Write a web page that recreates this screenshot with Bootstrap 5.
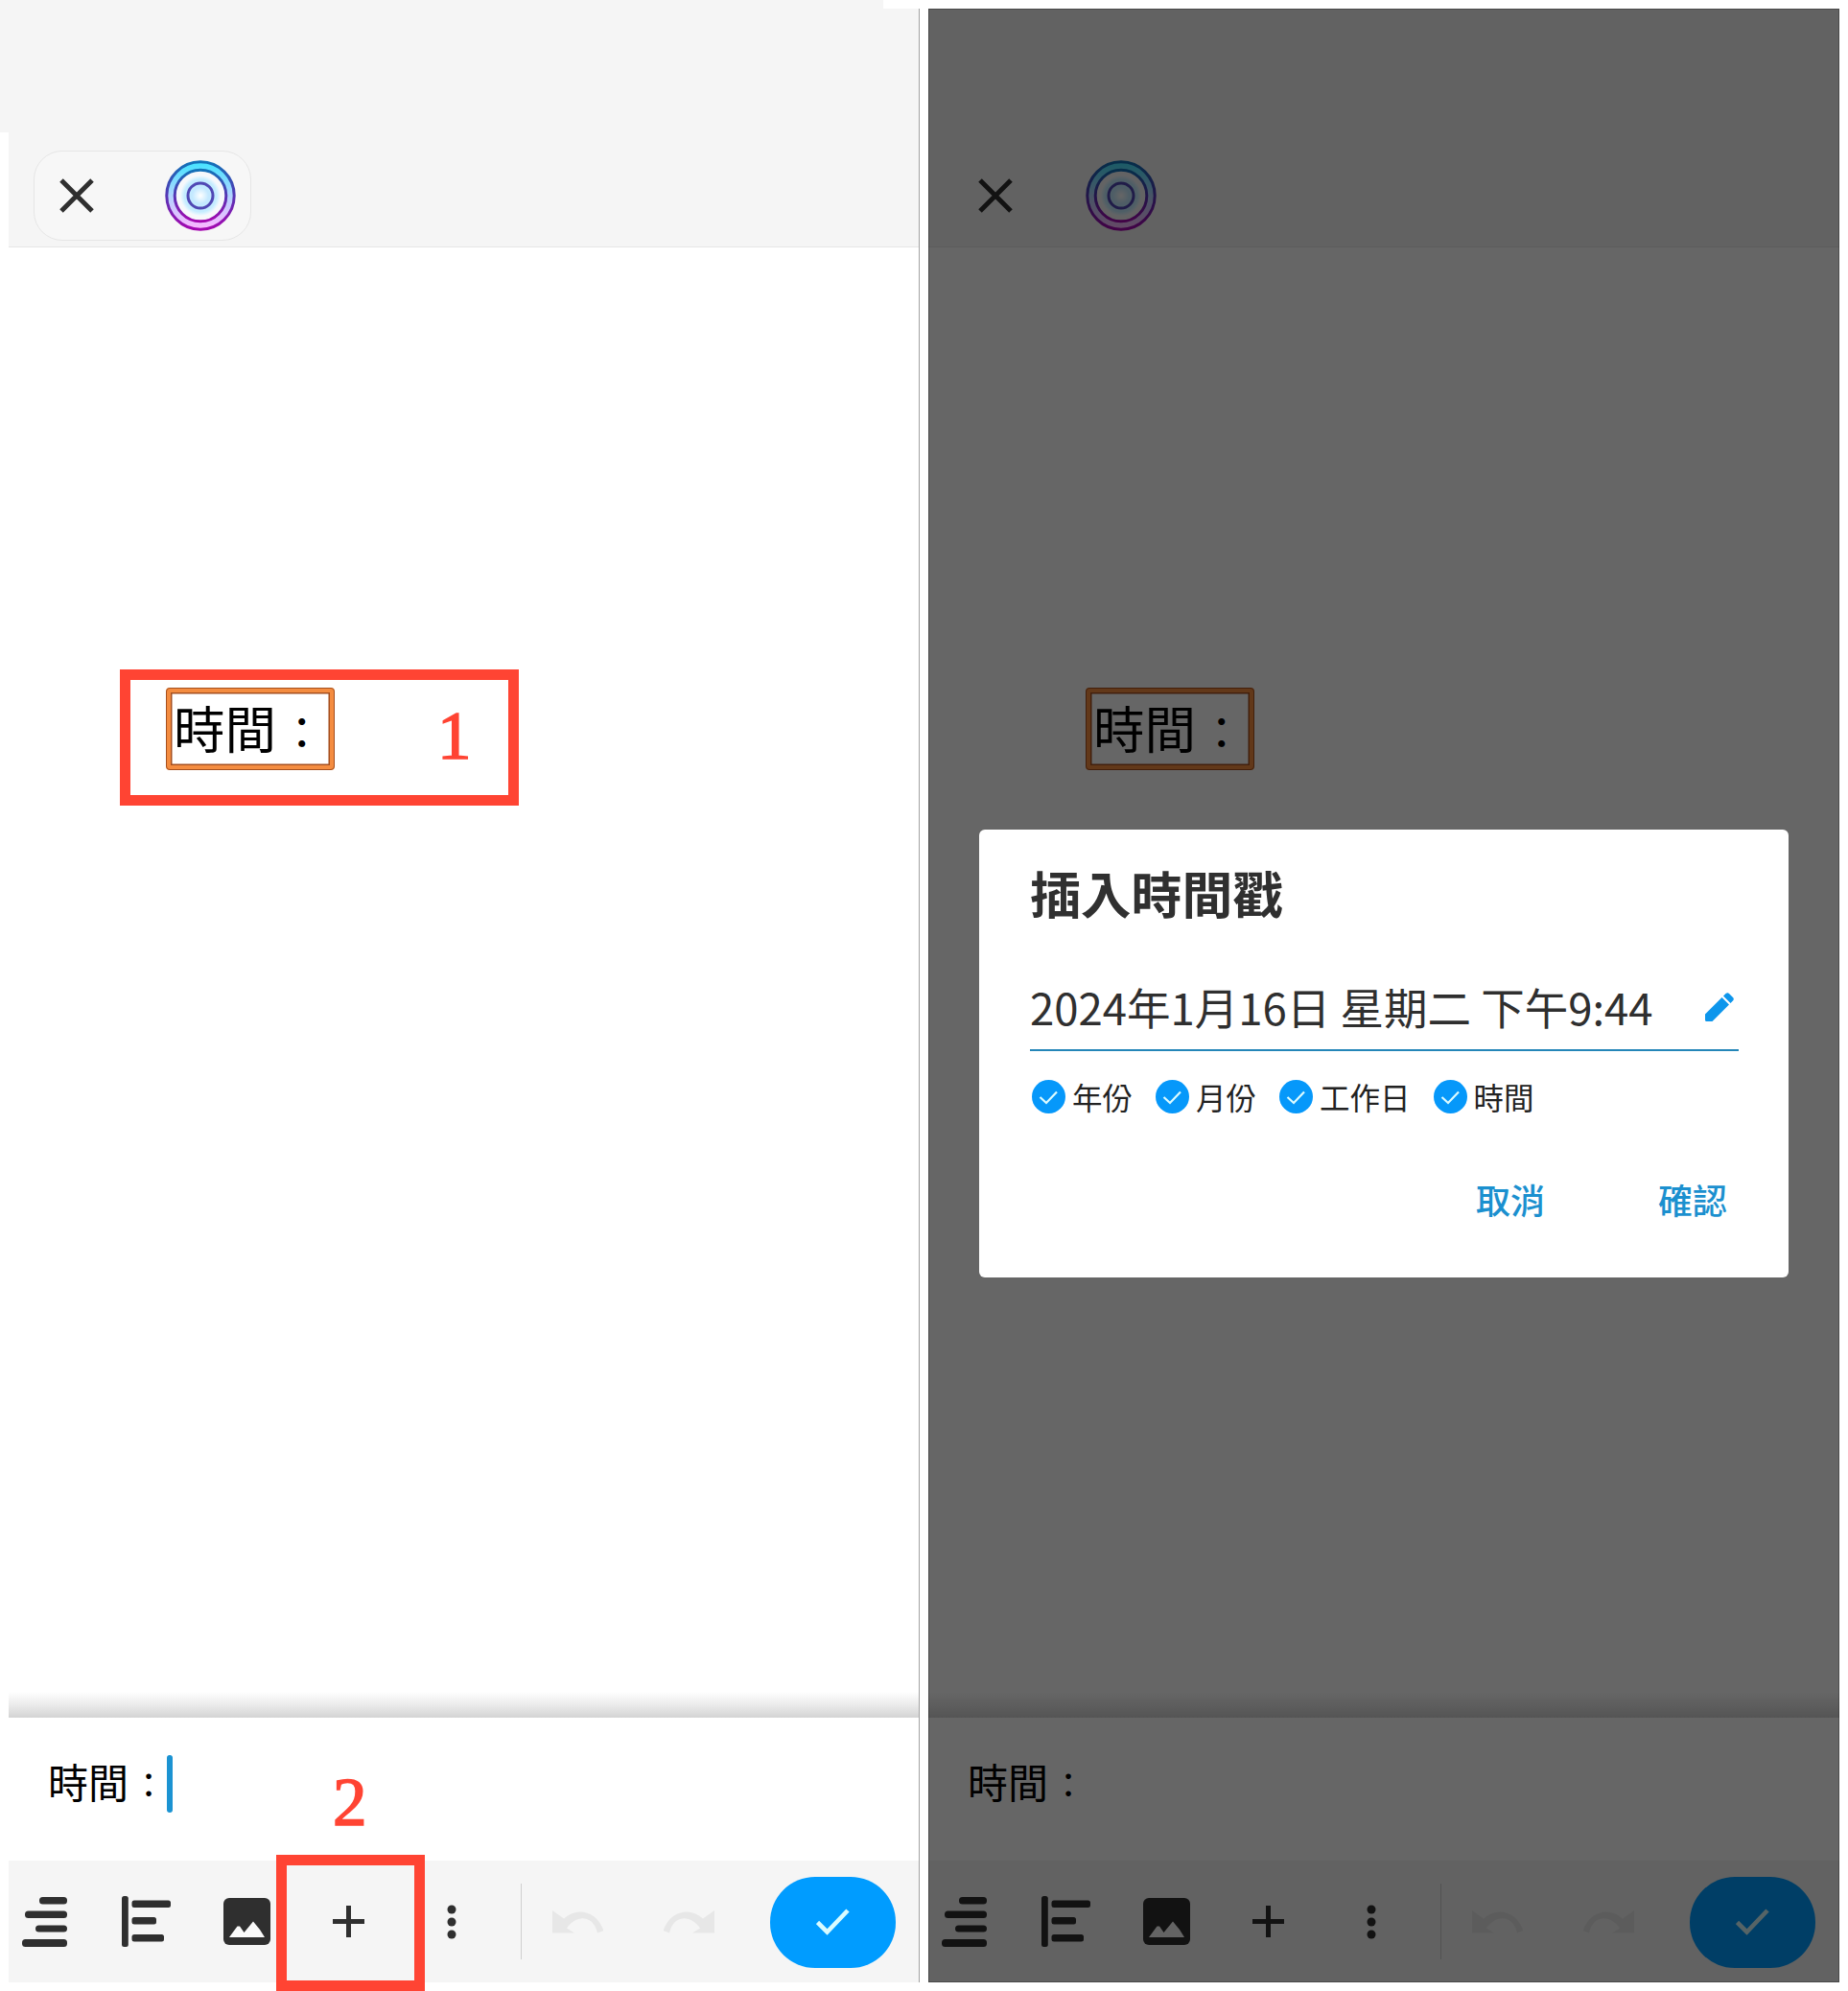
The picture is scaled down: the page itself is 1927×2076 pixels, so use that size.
<!DOCTYPE html>
<html lang="zh-Hant">
<head>
<meta charset="utf-8">
<meta name="viewport" content="width=device-width, initial-scale=1">
<title>插入時間戳</title>
<link href="https://cdn.jsdelivr.net/npm/bootstrap@5.3.0/dist/css/bootstrap.min.css" rel="stylesheet">
<style>
  body {
    font-family: "Noto Sans CJK TC", "Noto Sans", sans-serif;
    color: #2f2f2f;
    background: linear-gradient(#f5f5f5, #f5f5f5) 0 0 / 921px 9px no-repeat,
                linear-gradient(#f5f5f5, #f5f5f5) 0 0 / 9px 138px no-repeat, #fff;
  }
  svg { display: block; flex: none; }
  .stage { width: 1927px; height: 2076px; padding: 9px; gap: 9px; }
  .phone { width: 950px; height: 2058px; border-right: 1px solid #a2a2a2; background: #fff; }
  .phone-dim { border: 0; }
  .topbar { height: 249px; background: #f5f5f5; border-bottom: 1px solid #e6e6e6; padding: 0 0 6px 26px; }
  .top-pill { width: 227px; height: 94px; border: 1px solid #e6e6e6; border-radius: 30px; background: #f7f7f7; padding: 0 10px 0 26px; }
  .canvas-area { background: linear-gradient(to top, #d3d3d3, #ececec 14px, #fff 27px); }
  .topic { left: 164px; top: 459px; width: 176px; height: 86px; border: 5px solid #f48c40; border-radius: 4px;
    box-shadow: inset 0 0 0 1.5px #a54f1e; outline: 1.5px solid #a54f1e; outline-offset: -1.5px;
    color: #000; font-size: 53.5px; line-height: 72px; padding-left: 3px; white-space: nowrap; }
  .colon { display: inline-block; width: 1em; text-align: center; }
  .colon > span { font-size: .86em; }
  .entry { height: 149px; padding: 0 0 12px 41px; font-size: 42px; color: #000; }
  .entry-text { padding-bottom: 7px; }
  .caret { width: 6px; height: 60px; border-radius: 3px; background: #1b93d2; margin-left: -2px; }
  .toolbar { height: 127px; background: #f5f5f5; padding-left: 14px; }
  .tool-rule { width: 1px; height: 79px; background: #cfcfcf; margin: 0 32px 0 67px; }
  .btn-done { width: 131px; height: 95px; border-radius: 47px; background: #009cff; margin: 1px 0 0 58px; }
  .callout { border: 11px solid #ff4433; color: #ff4433; z-index: 5; }
  .callout-1 { left: 125px; top: 698px; width: 416px; height: 142px; }
  .callout-2 { left: 288px; top: 1934px; width: 155px; height: 142px; }
  .callout-num { color: #ff4433; font-family: "Liberation Serif", serif; font-size: 71px; line-height: 1; z-index: 5; -webkit-text-stroke: 1.6px #ff4433; }
  .num-1 { left: 456px; top: 732px; }
  .num-2 { left: 347px; top: 1844px; }
  .scrim { background: rgba(0,0,0,.6); box-shadow: inset 0 0 0 1px rgba(0,0,0,.25); }
  .stamp-dialog { width: 844px; height: 467px; left: 53px; top: 856px; border-radius: 6px; background: #fff; padding: 26px 52px 0 53px; }
  .dlg-title { font-size: 52.8px; line-height: 78px; font-weight: 700; margin: 0; color: #303030; }
  .dlg-value { height: 86px; margin-top: 41px; padding-right: 5px; border-bottom: 2px solid #2486b8; font-size: 45.5px; white-space: nowrap; }
  .dlg-value > span { padding-bottom: 6px; }
  .dlg-value > svg { margin-bottom: 4px; }
  .dlg-options { margin-top: 29px; padding-left: 2px; gap: 24px; font-size: 31.5px; line-height: 36px; color: #222; }
  .dlg-options > span { gap: 7px; }
  .dlg-actions { margin-top: 54px; gap: 118px; padding-right: 12px; }
  .dlg-actions button { border: 0; background: none; padding: 0; font-size: 36px; line-height: 70px; color: #1b90cf; font-weight: 500; }
</style>
<script src="https://cdn.jsdelivr.net/npm/bootstrap@5.3.0/dist/js/bootstrap.bundle.min.js"></script>
</head>
<body class="m-0">

<svg width="0" height="0" class="position-absolute" aria-hidden="true">
  <defs>
    <linearGradient id="ringLine" x1="0" y1="0" x2="0" y2="1"><stop offset="0" stop-color="#1272b8"/><stop offset=".5" stop-color="#5535b4"/><stop offset="1" stop-color="#a507b0"/></linearGradient>
    <linearGradient id="ringBand" x1="0" y1="0" x2="0" y2="1"><stop offset="0" stop-color="#3fe4ff"/><stop offset=".5" stop-color="#b2d4ff"/><stop offset="1" stop-color="#ffb4ff"/></linearGradient>
    <radialGradient id="ringCore"><stop offset="0" stop-color="#fff"/><stop offset=".4" stop-color="#c4e9ff"/><stop offset=".8" stop-color="#c4ecff"/><stop offset="1" stop-color="#f4f9fd"/></radialGradient>
  </defs>
  <symbol id="i-close" viewBox="0 0 36 36"><path d="M2 2 34 34M34 2 2 34" stroke="#2f2f2f" stroke-width="5"/></symbol>
  <symbol id="i-rings" viewBox="0 0 76 76">
    <circle cx="38" cy="38" r="36" fill="url(#ringBand)"/><circle cx="38" cy="38" r="27" fill="#f7f8fb"/>
    <circle cx="38" cy="38" r="21" fill="url(#ringCore)"/>
    <g fill="none" stroke="url(#ringLine)" stroke-width="3"><circle cx="38" cy="38" r="35.2"/><circle cx="38" cy="38" r="26.8"/></g>
    <circle cx="38" cy="38" r="13" fill="none" stroke="#5048b4" stroke-width="3"/>
  </symbol>
  <symbol id="i-right" viewBox="0 0 47 52"><g fill="#2f2f2f"><rect x="18" width="29" height="7.5" rx="3.5"/><rect x="3" y="14.5" width="44" height="7.5" rx="3.5"/><rect x="14" y="29.5" width="33" height="7" rx="3.5"/><rect y="44" width="47" height="8" rx="3.5"/></g></symbol>
  <symbol id="i-outline" viewBox="0 0 51 53"><g fill="#2f2f2f"><rect width="6.8" height="53" rx="2.5"/><rect x="10.5" y="4.5" width="40.5" height="7.5" rx="2.5"/><rect x="10.5" y="22" width="25.5" height="7.5" rx="2.5"/><rect x="10.5" y="40" width="33.5" height="7.5" rx="2.5"/></g></symbol>
  <symbol id="i-image" viewBox="0 0 49 49"><rect width="49" height="49" rx="6" fill="#2f2f2f"/><path d="M6 41 14.5 29.5 17 29.5 21.500 36 31 24.500 38 33 43 41Z" fill="#f9f9f9"/></symbol>
  <symbol id="i-plus" viewBox="0 0 33 33"><path d="M16.500 0V33M0 16.500H33" stroke="#2f2f2f" stroke-width="5"/></symbol>
  <symbol id="i-dots" viewBox="0 0 10 36"><g fill="#2f2f2f"><circle cx="5" cy="5" r="4.500"/><circle cx="5" cy="18" r="4.500"/><circle cx="5" cy="31" r="4.500"/></g></symbol>
  <symbol id="i-undo" viewBox="0 0 53 24"><path d="M0 0V23.500H23L15 18.500C24 5 42 3 47 23.500L53.500 21C46 .5 26-4 12 8.500Z" fill="#e7e7e7"/></symbol>
  <symbol id="i-check" viewBox="0 0 35 28"><path d="M1.500 14.500 11.500 24.500 33 2" fill="none" stroke="#d8fbff" stroke-width="4.600"/></symbol>
  <symbol id="i-tick" viewBox="0 0 35 35"><circle cx="17.500" cy="17.500" r="17.500" fill="#0698fa"/><path d="M8.500 18 15 24 26 12.500" fill="none" stroke="#dcfbff" stroke-width="2.200"/></symbol>
  <symbol id="i-pencil" viewBox="0 0 30 30"><path d="M0 22.500V28.500Q0 30 1.500 30H7.500L25 12.500 17.500 5ZM19 3.500 26.500 11 29.200 8.200Q30.500 6.500 29 5L25 1Q23.500-.5 21.800.8Z" fill="#0d96ec"/></symbol>
</svg>

<main class="stage d-flex position-relative overflow-hidden">

  <section class="phone d-flex flex-column flex-shrink-0">
    <header class="topbar d-flex align-items-end">
      <div class="top-pill d-flex align-items-center justify-content-between">
        <svg width="36" height="36"><use href="#i-close"/></svg>
        <svg width="76" height="76" class="me-1"><use href="#i-rings"/></svg>
      </div>
    </header>
    <div class="canvas-area flex-grow-1 position-relative">
      <div class="topic position-absolute">時間<span class="colon"><span>：</span></span></div>
    </div>
    <div class="entry d-flex align-items-center"><span class="entry-text">時間<span class="colon"><span>：</span></span></span><i class="caret"></i></div>
    <footer class="toolbar d-flex align-items-center">
      <svg width="47" height="52"><use href="#i-right"/></svg>
      <svg width="51" height="53" style="margin-left:57px"><use href="#i-outline"/></svg>
      <svg width="49" height="49" style="margin-left:55px"><use href="#i-image"/></svg>
      <svg width="33" height="33" style="margin-left:65px"><use href="#i-plus"/></svg>
      <svg width="10" height="36" style="margin-left:86px"><use href="#i-dots"/></svg>
      <span class="tool-rule"></span>
      <svg width="53" height="24"><use href="#i-undo"/></svg>
      <svg width="53" height="24" style="margin-left:63px"><use href="#i-undo" transform="translate(53 0) scale(-1 1)"/></svg>
      <div class="btn-done d-flex align-items-center justify-content-center"><svg width="35" height="28"><use href="#i-check"/></svg></div>
    </footer>
  </section>

  <section class="phone phone-dim d-flex flex-column flex-shrink-0 position-relative">
    <header class="topbar d-flex align-items-end">
      <div class="top-pill border-0 d-flex align-items-center justify-content-between bg-transparent">
        <svg width="36" height="36"><use href="#i-close"/></svg>
        <svg width="76" height="76" class="me-1"><use href="#i-rings"/></svg>
      </div>
    </header>
    <div class="canvas-area flex-grow-1 position-relative">
      <div class="topic position-absolute">時間<span class="colon"><span>：</span></span></div>
    </div>
    <div class="entry d-flex align-items-center"><span class="entry-text">時間<span class="colon"><span>：</span></span></span></div>
    <footer class="toolbar d-flex align-items-center">
      <svg width="47" height="52"><use href="#i-right"/></svg>
      <svg width="51" height="53" style="margin-left:57px"><use href="#i-outline"/></svg>
      <svg width="49" height="49" style="margin-left:55px"><use href="#i-image"/></svg>
      <svg width="33" height="33" style="margin-left:65px"><use href="#i-plus"/></svg>
      <svg width="10" height="36" style="margin-left:86px"><use href="#i-dots"/></svg>
      <span class="tool-rule"></span>
      <svg width="53" height="24"><use href="#i-undo"/></svg>
      <svg width="53" height="24" style="margin-left:63px"><use href="#i-undo" transform="translate(53 0) scale(-1 1)"/></svg>
      <div class="btn-done d-flex align-items-center justify-content-center"><svg width="35" height="28"><use href="#i-check"/></svg></div>
    </footer>

    <div class="scrim position-absolute top-0 start-0 w-100 h-100"></div>
    <div class="stamp-dialog position-absolute" role="dialog">
      <h2 class="dlg-title">插入時間戳</h2>
      <div class="dlg-value d-flex align-items-center justify-content-between">
        <span>2024年1月16日 星期二 下午9:44</span>
        <svg width="30" height="30"><use href="#i-pencil"/></svg>
      </div>
      <div class="dlg-options d-flex">
        <span class="d-flex align-items-center"><svg width="35" height="35"><use href="#i-tick"/></svg>年份</span>
        <span class="d-flex align-items-center"><svg width="35" height="35"><use href="#i-tick"/></svg>月份</span>
        <span class="d-flex align-items-center"><svg width="35" height="35"><use href="#i-tick"/></svg>工作日</span>
        <span class="d-flex align-items-center"><svg width="35" height="35"><use href="#i-tick"/></svg>時間</span>
      </div>
      <div class="dlg-actions d-flex justify-content-end">
        <button type="button">取消</button>
        <button type="button">確認</button>
      </div>
    </div>
  </section>

  <div class="callout callout-1 position-absolute"></div>
  <div class="callout-num num-1 position-absolute">1</div>
  <div class="callout callout-2 position-absolute"></div>
  <div class="callout-num num-2 position-absolute">2</div>
</main>
</body>
</html>
